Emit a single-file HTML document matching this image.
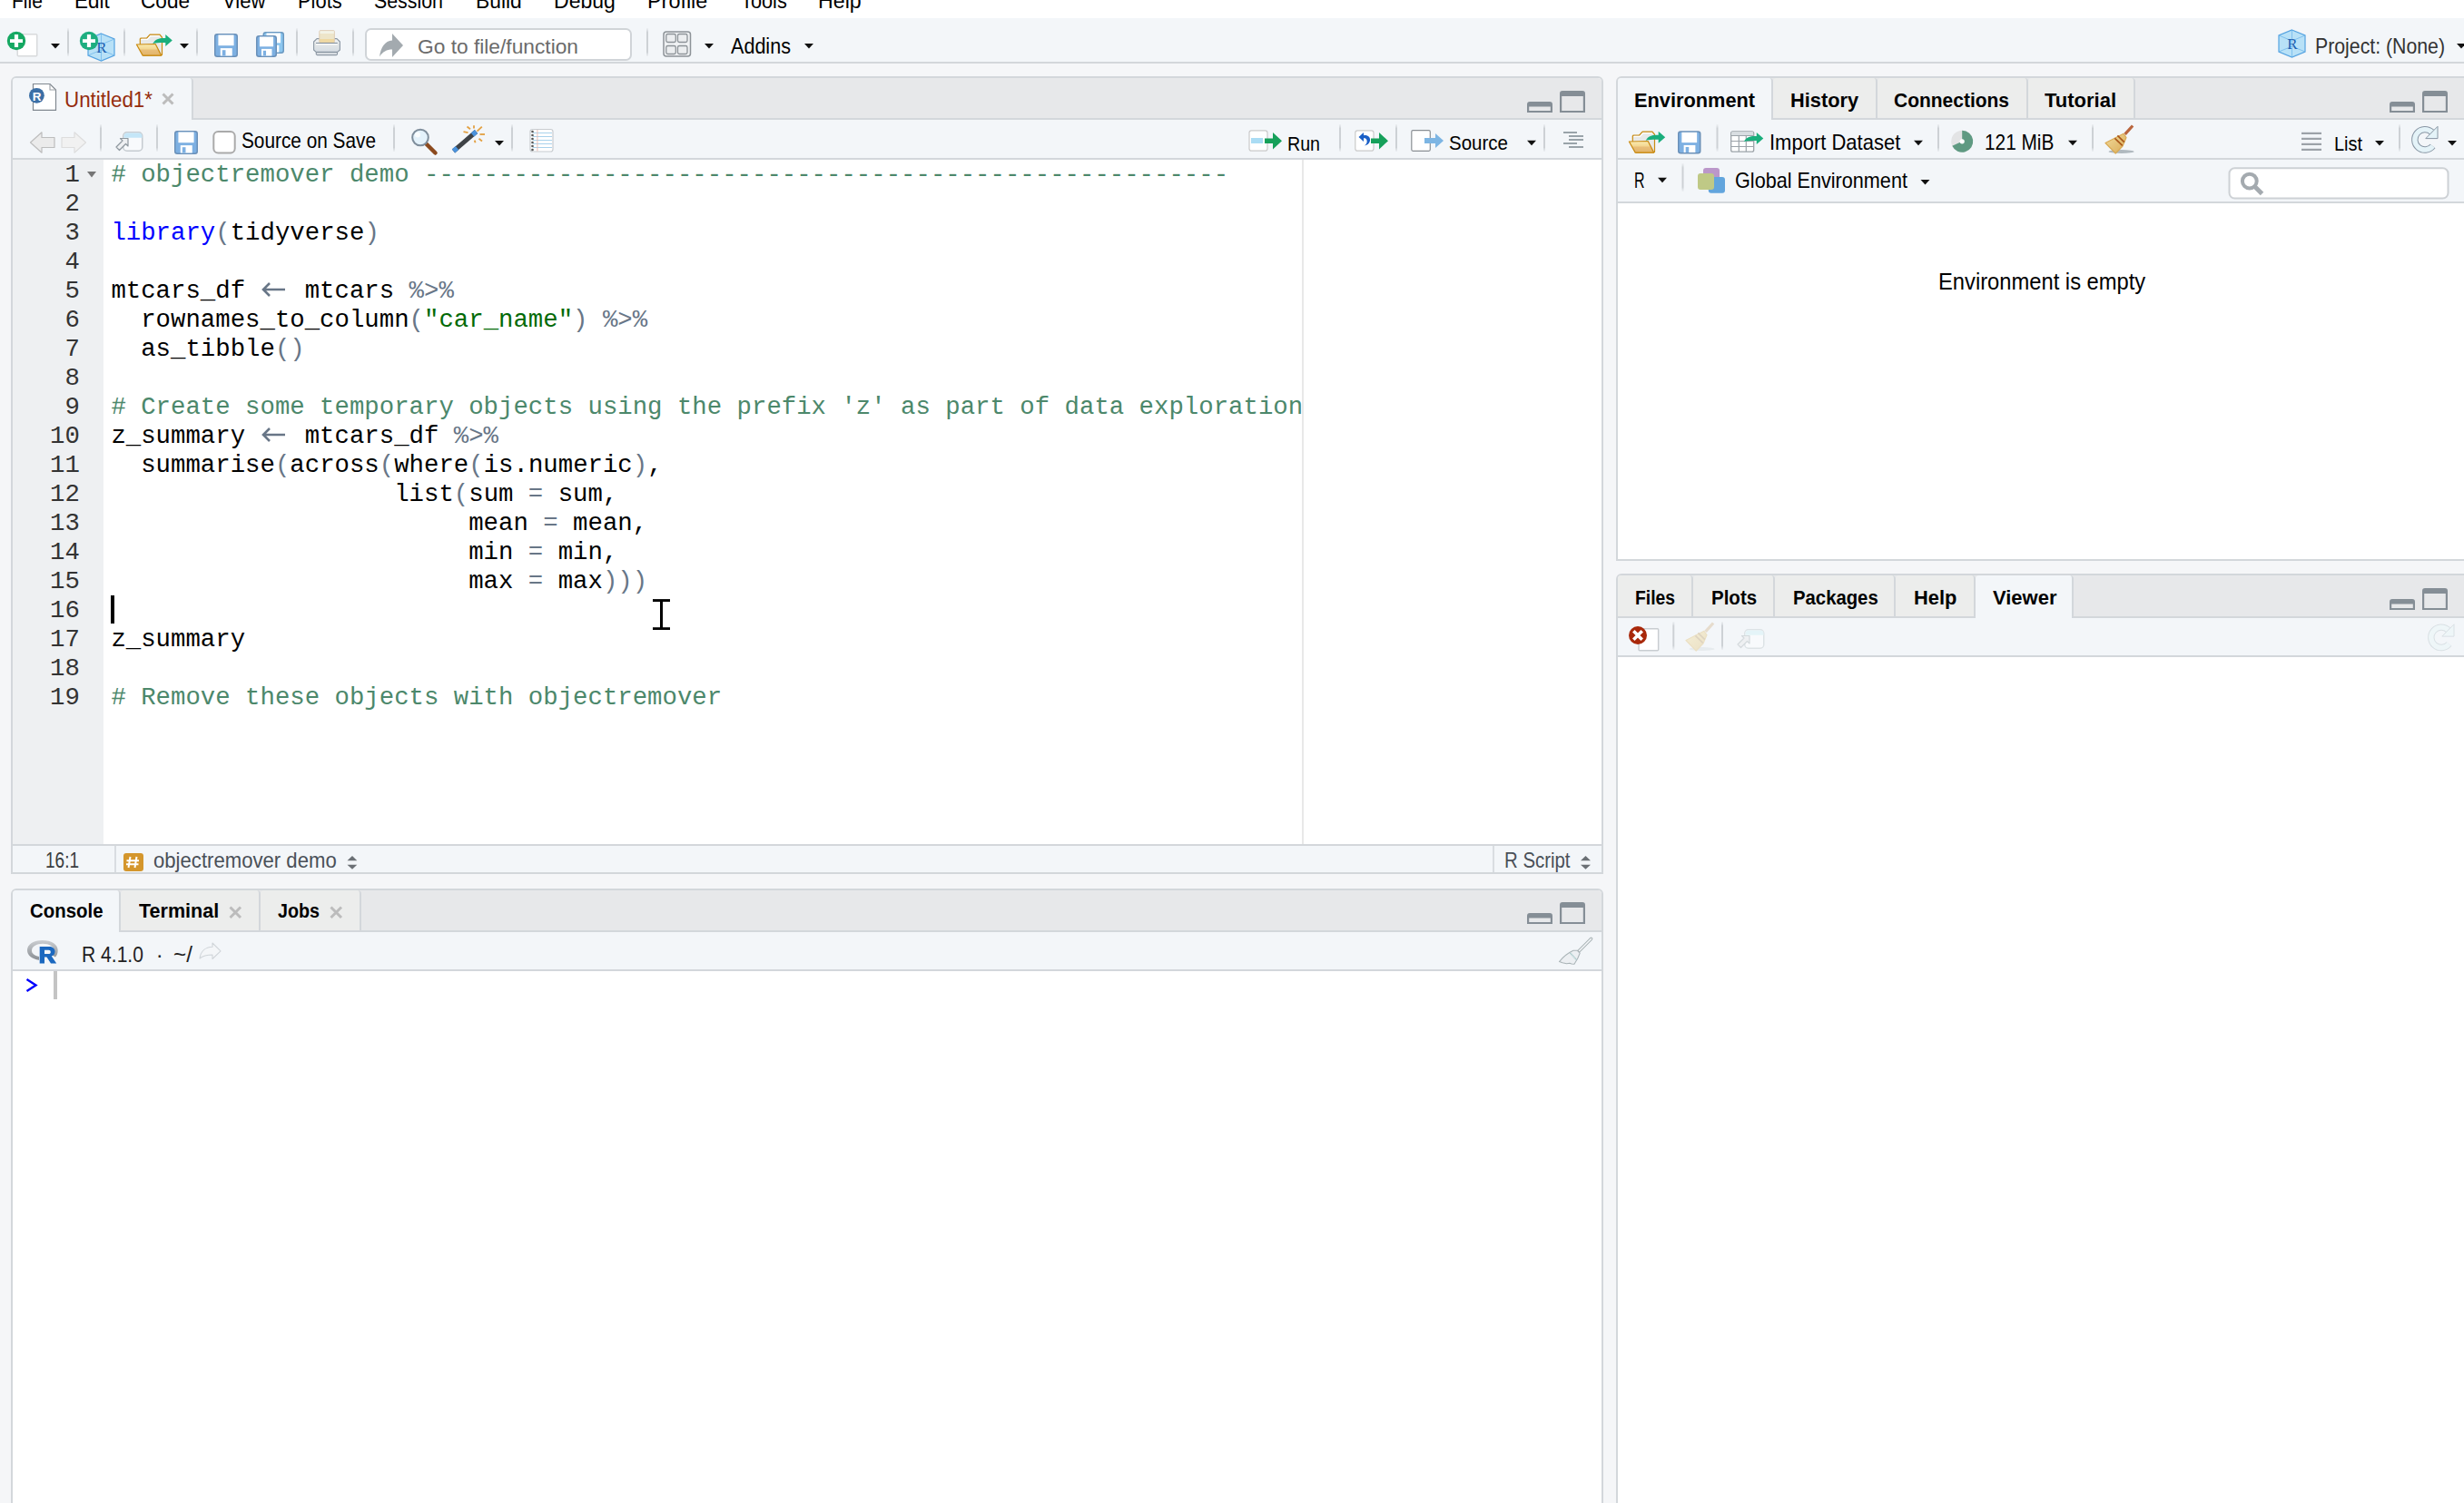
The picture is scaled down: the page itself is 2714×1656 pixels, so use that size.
<!DOCTYPE html>
<html><head><meta charset="utf-8">
<style>
html,body{margin:0;padding:0;}
body{width:2714px;height:1656px;position:relative;overflow:hidden;background:#f5f6f8;font-family:"Liberation Sans",sans-serif;color:#000;}
.a{position:absolute;box-sizing:border-box;}
svg.a{overflow:visible}
.t{position:absolute;line-height:1;white-space:pre;}
.b{font-weight:bold;}
.code{position:absolute;font-family:"Liberation Mono",monospace;font-size:27.35px;line-height:32px;white-space:pre;color:#000}
.cm{color:#4c886b}.kw{color:#0000ff}.op{color:#687687}.st{color:#036a07}
</style></head><body>
<div class="a" style="left:0;top:0;width:2714px;height:20px;background:#fff"></div>
<div class="a" style="left:0;top:20px;width:2714px;height:50px;background:#f3f6f9;border-bottom:2px solid #d3d7db"></div>
<div class="t" style="left:13.20px;top:-10.13px;font-size:23.19px;color:#000;transform:scaleX(0.9054);transform-origin:0 0">File</div>
<div class="t" style="left:82.00px;top:-10.13px;font-size:23.19px;color:#000;transform:scaleX(0.9675);transform-origin:0 0">Edit</div>
<div class="t" style="left:155.00px;top:-10.13px;font-size:23.19px;color:#000;transform:scaleX(0.9744);transform-origin:0 0">Code</div>
<div class="t" style="left:244.50px;top:-10.13px;font-size:23.19px;color:#000;transform:scaleX(0.9528);transform-origin:0 0">View</div>
<div class="t" style="left:327.70px;top:-10.13px;font-size:23.19px;color:#000;transform:scaleX(0.9439);transform-origin:0 0">Plots</div>
<div class="t" style="left:412.00px;top:-10.13px;font-size:23.19px;color:#000;transform:scaleX(0.9206);transform-origin:0 0">Session</div>
<div class="t" style="left:523.60px;top:-10.13px;font-size:23.19px;color:#000;transform:scaleX(0.9846);transform-origin:0 0">Build</div>
<div class="t" style="left:609.90px;top:-10.13px;font-size:23.19px;color:#000;transform:scaleX(0.9943);transform-origin:0 0">Debug</div>
<div class="t" style="left:713.00px;top:-10.13px;font-size:23.19px;color:#000;transform:scaleX(1.0085);transform-origin:0 0">Profile</div>
<div class="t" style="left:815.80px;top:-10.13px;font-size:23.19px;color:#000;transform:scaleX(0.9382);transform-origin:0 0">Tools</div>
<div class="t" style="left:901.00px;top:-10.13px;font-size:23.19px;color:#000;transform:scaleX(1.0010);transform-origin:0 0">Help</div>
<div class="a" style="left:12px;top:84px;width:1754px;height:879px;border:2px solid #d3d7db;border-radius:6px 6px 0 0;background:#fff;overflow:hidden"></div>
<div class="a" style="left:14px;top:86px;width:1750px;height:44px;background:#e7e8ea;border-radius:4px 4px 0 0"></div>
<div class="a" style="left:14px;top:130px;width:1750px;height:2px;background:#d3d7db"></div>
<div class="a" style="left:14px;top:86px;width:199px;height:46px;background:#f3f6f9;border-right:2px solid #d3d7db;border-radius:4px 4px 0 0"></div>
<div class="a" style="left:14px;top:132px;width:1750px;height:44px;background:#f3f6f9;border-bottom:2px solid #d3d7db"></div>
<div class="a" style="left:14px;top:176px;width:100px;height:754px;background:#eef0f2"></div>
<div class="a" style="left:1434px;top:176px;width:2px;height:755px;background:#e8e8e8"></div>
<div class="a" style="left:14px;top:930px;width:1750px;height:31px;background:#f3f6f9;border-top:2px solid #d3d7db"></div>
<div class="a" style="left:126px;top:932px;width:2px;height:29px;background:#d9dde1"></div>
<div class="a" style="left:1643.5px;top:932px;width:2px;height:29px;background:#d9dde1"></div>
<div class="a" style="left:12px;top:979px;width:1754px;height:720px;border:2px solid #d3d7db;border-radius:6px 6px 0 0;background:#fff;overflow:hidden"></div>
<div class="a" style="left:14px;top:981px;width:1750px;height:44px;background:#e7e8ea;border-radius:4px 4px 0 0"></div>
<div class="a" style="left:14px;top:1025px;width:1750px;height:2px;background:#d3d7db"></div>
<div class="a" style="left:14px;top:981px;width:119px;height:46px;background:#f3f6f9;border-right:2px solid #d3d7db;border-radius:4px 4px 0 0"></div>
<div class="a" style="left:133px;top:981px;width:154px;height:44px;background:#ecedec;border-right:2px solid #d3d7db;border-radius:4px 4px 0 0"></div>
<div class="a" style="left:287px;top:981px;width:111px;height:44px;background:#ecedec;border-right:2px solid #d3d7db;border-radius:4px 4px 0 0"></div>
<div class="a" style="left:14px;top:1027px;width:1750px;height:43px;background:#f3f6f9;border-bottom:2px solid #d3d7db"></div>
<div class="a" style="left:1780px;top:84px;width:940px;height:534px;border:2px solid #d3d7db;border-radius:6px 6px 0 0;background:#fff;overflow:hidden"></div>
<div class="a" style="left:1782px;top:86px;width:936px;height:44px;background:#e7e8ea;border-radius:4px 4px 0 0"></div>
<div class="a" style="left:1782px;top:130px;width:936px;height:2px;background:#d3d7db"></div>
<div class="a" style="left:1782px;top:86px;width:171px;height:46px;background:#f3f6f9;border-right:2px solid #d3d7db;border-radius:4px 4px 0 0"></div>
<div class="a" style="left:1953px;top:86px;width:115px;height:44px;background:#ecedec;border-right:2px solid #d3d7db;border-radius:4px 4px 0 0"></div>
<div class="a" style="left:2068px;top:86px;width:166px;height:44px;background:#ecedec;border-right:2px solid #d3d7db;border-radius:4px 4px 0 0"></div>
<div class="a" style="left:2234px;top:86px;width:118px;height:44px;background:#ecedec;border-right:2px solid #d3d7db;border-radius:4px 4px 0 0"></div>
<div class="a" style="left:1782px;top:132px;width:936px;height:44px;background:#f3f6f9;border-bottom:2px solid #d3d7db"></div>
<div class="a" style="left:1782px;top:176px;width:936px;height:48px;background:#f3f6f9;border-bottom:2px solid #d3d7db"></div>
<div class="a" style="left:1780px;top:616px;width:940px;height:2px;background:#d3d7db"></div>
<div class="a" style="left:1780px;top:632px;width:940px;height:1050px;border:2px solid #d3d7db;border-radius:6px 6px 0 0;background:#fff;overflow:hidden"></div>
<div class="a" style="left:1782px;top:634px;width:936px;height:45px;background:#e7e8ea;border-radius:4px 4px 0 0"></div>
<div class="a" style="left:1782px;top:679px;width:936px;height:2px;background:#d3d7db"></div>
<div class="a" style="left:1782px;top:634px;width:83px;height:45px;background:#ecedec;border-right:2px solid #d3d7db;border-radius:4px 4px 0 0"></div>
<div class="a" style="left:1865px;top:634px;width:90px;height:45px;background:#ecedec;border-right:2px solid #d3d7db;border-radius:4px 4px 0 0"></div>
<div class="a" style="left:1955px;top:634px;width:133px;height:45px;background:#ecedec;border-right:2px solid #d3d7db;border-radius:4px 4px 0 0"></div>
<div class="a" style="left:2088px;top:634px;width:88px;height:45px;background:#ecedec;border-right:2px solid #d3d7db;border-radius:4px 4px 0 0"></div>
<div class="a" style="left:2176px;top:634px;width:108px;height:47px;background:#f3f6f9;border-right:2px solid #d3d7db;border-radius:4px 4px 0 0"></div>
<div class="a" style="left:1782px;top:681px;width:936px;height:43px;background:#f3f6f9;border-bottom:2px solid #d3d7db"></div>
<svg style="position:absolute;left:0;top:0" width="2714" height="1656" viewBox="0 0 2714 1656"><defs><linearGradient id="sepg" x1="0" y1="0" x2="0" y2="1"><stop offset="0" stop-color="#d3d7db" stop-opacity="0.2"/><stop offset="0.15" stop-color="#cdd1d5"/><stop offset="0.85" stop-color="#cdd1d5"/><stop offset="1" stop-color="#d3d7db" stop-opacity="0.2"/></linearGradient></defs><rect x="19.25" y="37.75" width="21.5" height="24.0" rx="1" fill="#fff" stroke="#d8dadc" stroke-width="1.5"/><circle cx="18" cy="45" r="10.2" fill="#15a862"/><rect x="11" y="43.2" width="14" height="3.8" fill="#fff"/><rect x="15.9" y="38" width="4.2" height="14" fill="#fff"/><path d="M56 48H66L61.0 53.5Z" fill="#111"/><rect x="74" y="31" width="2" height="31" fill="url(#sepg)"/><polygon points="111.5,37.0 126.0,43.0 126.0,61.0 111.5,67.0 97.0,61.0 97.0,43.0" fill="#b5e0f7" stroke="#4d9fe0" stroke-width="1.2" opacity="0.95"/><path d="M111.5,37.0L111.5,67.0M97.0,43.0L111.5,49.0L126.0,43.0M97.0,61.0L111.5,55.0L126.0,61.0" stroke="#6ab4ea" stroke-width="0.9" fill="none" opacity="0.8"/><text x="112.0" y="58.0" font-family="Liberation Serif" font-size="17.0" fill="#1c5fb0" text-anchor="middle">R</text><circle cx="98" cy="45" r="10.2" fill="#1eae80"/><rect x="91" y="43.2" width="14" height="3.8" fill="#fff"/><rect x="95.9" y="38" width="4.2" height="14" fill="#fff"/><rect x="136" y="31" width="2" height="31" fill="url(#sepg)"/><defs><linearGradient id="fg150" x1="0" y1="0" x2="0" y2="1"><stop offset="0" stop-color="#fdf6d8"/><stop offset="0.12" stop-color="#f8e6a8"/><stop offset="0.45" stop-color="#f3d690"/><stop offset="0.5" stop-color="#e9bf7a"/><stop offset="1" stop-color="#e2b46a"/></linearGradient></defs><polygon points="154.3,48.7 154.3,43.0 155.2,42.0 161.7,42.0 165.1,38.1 176.0,38.1 178.5,41.2 178.5,60.2 177.5,61.1 158.0,61.1" fill="#e8e9e8" stroke="#c98a10" stroke-width="1.2" stroke-linejoin="round"/><polygon points="155.2,42.9 161.9,42.9 165.4,39.0 175.6,39.0 176.5,40.3 166.0,40.3 162.6,44.0 155.2,44.0" fill="#ffffff"/><polygon points="150.4,49.0 171.2,48.5 177.6,60.9 157.2,61.1" fill="url(#fg150)" stroke="#c98a10" stroke-width="1.2" stroke-linejoin="round"/><path d="M168.3 47.9C171.0 43.5 175.0 42.0 180.0 42.0L182.3 42.0L182.3 37.9L189.8 44.4L182.3 51.0L182.3 46.9L180.0 46.9C175.0 46.9 171.5 47.3 168.3 47.9Z" fill="#1aae7c"/><path d="M198 48H208L203.0 53.5Z" fill="#111"/><rect x="216" y="31" width="2" height="31" fill="url(#sepg)"/><rect x="236.75" y="37.75" width="24.5" height="24.5" rx="2.5" fill="#7db0e2" stroke="#6a90b8" stroke-width="1.5"/><rect x="240.42" y="38.5" width="17.16" height="11.700000000000001" fill="#fff"/><rect x="242.76" y="53.120000000000005" width="13.0" height="8.38" fill="#fff"/><rect x="244.84" y="55.2" width="3.6400000000000006" height="6.3" fill="#7db0e2"/><rect x="290.25" y="35.75" width="22.0" height="22.5" rx="2.5" fill="#8cc6ef" stroke="#6a98c0" stroke-width="1.5"/><rect x="293.495" y="36.5" width="15.510000000000002" height="10.8" fill="#fff"/><rect x="295.61" y="49.879999999999995" width="11.75" height="7.620000000000001" fill="#fff"/><rect x="297.49" y="51.8" width="3.2900000000000005" height="5.699999999999999" fill="#8cc6ef"/><rect x="282.75" y="39.75" width="21.5" height="22.5" rx="2.5" fill="#7db0e2" stroke="#6a90b8" stroke-width="1.5"/><rect x="285.91" y="40.5" width="15.180000000000001" height="10.8" fill="#fff"/><rect x="287.98" y="53.879999999999995" width="11.5" height="7.620000000000001" fill="#fff"/><rect x="289.82" y="55.8" width="3.22" height="5.699999999999999" fill="#7db0e2"/><rect x="326" y="31" width="2" height="31" fill="url(#sepg)"/><defs><linearGradient id="ppg" x1="0" y1="0" x2="0" y2="1"><stop offset="0" stop-color="#f3f3e6"/><stop offset="0.22" stop-color="#f3f3e6"/><stop offset="0.25" stop-color="#ede5c9"/><stop offset="0.7" stop-color="#ede5c9"/><stop offset="0.72" stop-color="#efd9a2"/><stop offset="1" stop-color="#efd9a2"/></linearGradient><linearGradient id="prg" x1="0" y1="0" x2="0" y2="1"><stop offset="0" stop-color="#f2f4f4"/><stop offset="0.45" stop-color="#e2e6e7"/><stop offset="1" stop-color="#d5dce3"/></linearGradient></defs><path d="M349 42.6L345.6 46V55L348.2 57.4H371.6L374.4 55V46L371 42.6Z" fill="url(#prg)" stroke="#8b97a3" stroke-width="1.1" stroke-linejoin="round"/><rect x="351.8" y="33.6" width="16.6" height="13.5" rx="1" fill="url(#ppg)" stroke="#dccbb2" stroke-width="0.9"/><rect x="348" y="47" width="23.8" height="1.1" fill="#7f8d9b"/><rect x="348" y="48.1" width="23.8" height="1.2" fill="#ffffff"/><path d="M348.3 57.6V59.8L349.3 60.6H370.6L371.5 59.8V57.6Z" fill="#e3e7eb" stroke="#8b97a3" stroke-width="1.1" stroke-linejoin="round"/><rect x="388" y="31" width="2" height="31" fill="url(#sepg)"/><rect x="403" y="32" width="292" height="34" rx="5.5" fill="#fff" stroke="#d0d4d8" stroke-width="2"/><path d="M418 62.5C419.5 52 424 45 432 44.5V37L444 50L432 63V54.5C426 54.5 421.5 57 418 62.5Z" fill="#a3aaaf"/><rect x="712" y="31" width="2" height="31" fill="url(#sepg)"/><rect x="731" y="35" width="29.5" height="27" rx="3" fill="#f0f2f4" stroke="#8d9398" stroke-width="1.5"/><rect x="733.8" y="37.5" width="10.5" height="9" rx="1.8" fill="#eceef0" stroke="#8d9398" stroke-width="1.3"/><rect x="733.8" y="50.5" width="10.5" height="9" rx="1.8" fill="#eceef0" stroke="#8d9398" stroke-width="1.3"/><rect x="746.5" y="37.5" width="10.5" height="9" rx="1.8" fill="#eceef0" stroke="#8d9398" stroke-width="1.3"/><rect x="746.5" y="50.5" width="10.5" height="9" rx="1.8" fill="#eceef0" stroke="#8d9398" stroke-width="1.3"/><path d="M776 48H786L781.0 53.5Z" fill="#111"/><path d="M886 48H896L891.0 53.5Z" fill="#111"/><polygon points="2524.5,33.0 2539.0,39.0 2539.0,57.0 2524.5,63.0 2510.0,57.0 2510.0,39.0" fill="#b5e0f7" stroke="#4d9fe0" stroke-width="1.2" opacity="0.95"/><path d="M2524.5,33.0L2524.5,63.0M2510.0,39.0L2524.5,45.0L2539.0,39.0M2510.0,57.0L2524.5,51.0L2539.0,57.0" stroke="#6ab4ea" stroke-width="0.9" fill="none" opacity="0.8"/><text x="2525.0" y="54.0" font-family="Liberation Serif" font-size="17.0" fill="#1c5fb0" text-anchor="middle">R</text><path d="M2706 48H2716L2711.0 53.5Z" fill="#111"/><path d="M36.5 92.5H55L61.5 99V121.3H36.5Z" fill="#fff" stroke="#808890" stroke-width="1.2"/><path d="M55 92.5V99H61.5" fill="none" stroke="#9aa0a6" stroke-width="1.1"/><circle cx="40.4" cy="105.3" r="8.4" fill="#3b6fa6"/><text x="40.6" y="110.5" font-family="Liberation Sans" font-weight="bold" font-size="13.5" fill="#fff" text-anchor="middle">R</text><path d="M179.5 103.5L190.5 114.5M190.5 103.5L179.5 114.5" stroke="#bcbcbc" stroke-width="3"/><path d="M33.5 157L46 145.8V151.5H60V162.5H46V168.2Z" fill="#ebebeb" stroke="#bdbdbd" stroke-width="1.2" stroke-linejoin="round"/><path d="M94.5 157L82 145.8V151.5H68V162.5H82V168.2Z" fill="#f1f1f1" stroke="#dddddd" stroke-width="1.2" stroke-linejoin="round"/><rect x="110" y="137" width="2" height="30" fill="url(#sepg)"/><rect x="135.75" y="145.75" width="21" height="20.5" rx="4" fill="#f8fafc" stroke="#c5cbd0" stroke-width="1.5"/><path d="M136.5 150a3.5 3.5 0 0 1 3.5-3.5h13a3.5 3.5 0 0 1 3.5 3.5v1.8h-20z" fill="#c4e6f8"/><path d="M128 162L135 155L132.5 152.5H141V161L138.5 158.5L131.5 165.5Z" fill="#eef0f2" stroke="#8e979e" stroke-width="1.2" stroke-linejoin="round"/><rect x="172" y="137" width="2" height="30" fill="url(#sepg)"/><rect x="192.75" y="144.75" width="24.5" height="24.5" rx="2.5" fill="#7db0e2" stroke="#6a90b8" stroke-width="1.5"/><rect x="196.42" y="145.5" width="17.16" height="11.700000000000001" fill="#fff"/><rect x="198.76" y="160.12" width="13.0" height="8.38" fill="#fff"/><rect x="200.84" y="162.2" width="3.6400000000000006" height="6.3" fill="#7db0e2"/><rect x="235.3" y="145" width="23.4" height="23.6" rx="5" fill="#fff" stroke="#aaaaaa" stroke-width="2"/><rect x="433" y="137" width="2" height="30" fill="url(#sepg)"/><path d="M469 158L479.5 168.5" stroke="#8c4a1e" stroke-width="4.5" stroke-linecap="round"/><circle cx="463" cy="151.5" r="8.8" fill="#e4f2fb" stroke="#7f8e9c" stroke-width="2"/><circle cx="460" cy="148.5" r="3" fill="#fff" opacity="0.8"/><path d="M499.5 166.5L524.5 145" stroke="#3e4246" stroke-width="5"/><path d="M499.5 166.5L503.5 163M520.5 148.5L524.5 145" stroke="#4a92dc" stroke-width="5.2"/><path d="M514.5 139.5L518 142.3" stroke="#e3a040" stroke-width="1.8"/><path d="M522 138.3L522 141.5" stroke="#e3a040" stroke-width="1.8"/><path d="M525.5 144.6L530.8 139.6" stroke="#e3a040" stroke-width="1.8"/><path d="M510.5 145.2L515.5 146.1" stroke="#e3a040" stroke-width="1.8"/><path d="M528.5 148L534 148" stroke="#e3a040" stroke-width="1.8"/><path d="M527.5 152.8L531 155.5" stroke="#e3a040" stroke-width="1.8"/><path d="M522.7 154.6L523.6 157.2" stroke="#e3a040" stroke-width="1.8"/><path d="M545 155H555L550.0 160.5Z" fill="#111"/><rect x="563" y="137" width="2" height="30" fill="url(#sepg)"/><rect x="584" y="142.5" width="25" height="24.5" rx="2.5" fill="#fff" stroke="#c8ccd0" stroke-width="1.2"/><rect x="587" y="146" width="21" height="1" fill="#a9d2ec"/><rect x="587" y="150" width="21" height="1" fill="#a9d2ec"/><rect x="587" y="154" width="21" height="1" fill="#a9d2ec"/><rect x="587" y="158" width="21" height="1" fill="#a9d2ec"/><rect x="587" y="162" width="21" height="1" fill="#a9d2ec"/><rect x="591.5" y="143" width="0.9" height="23.5" fill="#e8b8b0"/><circle cx="586.5" cy="145" r="1.3" fill="#555"/><circle cx="586.5" cy="149" r="1.3" fill="#555"/><circle cx="586.5" cy="153" r="1.3" fill="#555"/><circle cx="586.5" cy="157" r="1.3" fill="#555"/><circle cx="586.5" cy="161" r="1.3" fill="#555"/><circle cx="586.5" cy="165" r="1.3" fill="#555"/><rect x="1376" y="143.8" width="20" height="22.4" rx="2.5" fill="#fff" stroke="#cacaca" stroke-width="1.2"/><rect x="1378" y="152" width="13" height="6" fill="#aadcf4"/><path d="M1393 152.5H1402V146L1412 155.2L1402 164.5V158H1393Z" fill="#16a05a"/><rect x="1475" y="137" width="2" height="30" fill="url(#sepg)"/><rect x="1492.8" y="143.8" width="20.2" height="22.4" rx="2.5" fill="#fff" stroke="#cacaca" stroke-width="1.2"/><path d="M1496.5 151L1502 146V149C1507 148.5 1509.5 151 1509 155C1508.5 158 1506 160 1503 160.5C1505.5 158.5 1506 156.5 1505.5 154.5C1505 152.5 1503.5 152 1502 152.2V156Z" fill="#1a5fc6"/><path d="M1510 152.5H1519V146L1529 155.2L1519 164.5V158H1510Z" fill="#16a05a"/><rect x="1537" y="137" width="2" height="30" fill="url(#sepg)"/><rect x="1554.8" y="143.7" width="20.5" height="22.6" rx="1.5" fill="#fff" stroke="#8a8f94" stroke-width="1.2"/><path d="M1569 152H1581V147L1590 155L1581 163V158H1569Z" fill="#7db5e3"/><path d="M1682 154.7H1692L1687.0 160.2Z" fill="#111"/><rect x="1700" y="137" width="2" height="30" fill="url(#sepg)"/><rect x="1722" y="145" width="15" height="2" fill="#99a3a9"/><rect x="1728" y="149" width="16" height="2" fill="#99a3a9"/><rect x="1728" y="153" width="16" height="2" fill="#99a3a9"/><rect x="1722" y="157" width="15" height="2" fill="#99a3a9"/><rect x="1728" y="161" width="16" height="2" fill="#99a3a9"/><path d="M1682 124V115a3 3 0 0 1 3-3h22a3 3 0 0 1 3 3v9z M1684.2 122h23.6v-4.4H1684.2z" fill="#858e96" fill-rule="evenodd"/><path d="M1718 124V103a3 3 0 0 1 3-3h22a3 3 0 0 1 3 3v21z M1720.2 122h23.6V106H1720.2z" fill="#858e96" fill-rule="evenodd"/><rect x="136" y="940" width="22" height="20" rx="3" fill="#d4962c"/><path d="M143.5 944L141.5 956M150.5 944L148.5 956M139.5 948.3H153M139 952.3H152.5" stroke="#fff" stroke-width="2"/><path d="M382.5 948.2L388 943L393.3 948.2Z M382.5 952.7L388 957.8L393.3 952.7Z" fill="#6b7075"/><path d="M1741 948.2L1746.5 943L1752 948.2Z M1741 952.7L1746.5 957.8L1752 952.7Z" fill="#6b7075"/><path d="M1682 1018V1009a3 3 0 0 1 3-3h22a3 3 0 0 1 3 3v9z M1684.2 1016h23.6v-4.4H1684.2z" fill="#858e96" fill-rule="evenodd"/><path d="M1718 1018V997a3 3 0 0 1 3-3h22a3 3 0 0 1 3 3v21z M1720.2 1016h23.6V1000H1720.2z" fill="#858e96" fill-rule="evenodd"/><path d="M253.5 999.5L265 1011M265 999.5L253.5 1011" stroke="#bcbcbc" stroke-width="3"/><path d="M364.5 999.5L376 1011M376 999.5L364.5 1011" stroke="#bcbcbc" stroke-width="3"/><defs><linearGradient id="rlg" x1="0" y1="0" x2="0" y2="1"><stop offset="0" stop-color="#cbced1"/><stop offset="1" stop-color="#8a8f94"/></linearGradient></defs><path d="M46.8 1036C37 1036 30 1040.5 30 1047C30 1052.5 35 1056.5 43 1057.8V1054C38 1053 35 1050.5 35 1047.5C35 1043 40 1039.8 47 1039.8C54.5 1039.8 59.5 1043 59.5 1047.5C59.5 1049.3 58.5 1051 57 1052.2L61 1054.5C62.8 1052.5 63.7 1050 63.7 1047C63.7 1040.5 56.5 1036 46.8 1036Z" fill="url(#rlg)"/><path d="M43.7 1043H54.5C58.5 1043 60.5 1045.5 60.5 1048.5C60.5 1051 59 1052.8 56.8 1053.5L62.2 1061.6H56L51.5 1054.5H49V1061.6H43.7Z M49 1046.8V1051H53.5C55 1051 55.8 1050.2 55.8 1048.9C55.8 1047.6 55 1046.8 53.5 1046.8Z" fill="#1b68bf" fill-rule="evenodd"/><path d="M220 1056C221 1048.5 226 1043.5 234 1043.3V1039L243 1047.8L234 1056.5V1052C228 1052 223.5 1053 220 1056Z" fill="#f4f6f8" stroke="#d0d5d9" stroke-width="1.1" stroke-linejoin="round"/><path d="M1752.5 1034.5L1739.5 1047.5" stroke="#a9b3b6" stroke-width="3.6" stroke-linecap="round"/><path d="M1752.5 1034.5L1739.5 1047.5" stroke="#f4f6f8" stroke-width="1.6" stroke-linecap="round"/><path d="M1737.5 1047.3L1740.2 1050.2C1739 1054 1737 1058 1734 1062.3L1731 1062L1729 1061.3L1725.5 1061.8L1721 1060.8L1717.5 1059.6C1722 1054 1727 1050 1733 1047.3Z" fill="#eceff2" stroke="#a9b3b6" stroke-width="1.1" stroke-linejoin="round"/><path d="M1729.5 1050L1736.5 1057.5" stroke="#9ec4c4" stroke-width="1.6" stroke-dasharray="1 0.6"/><path d="M29.5 1079L39.5 1085.5L29.5 1092" stroke="#0000ff" stroke-width="2.4" fill="none"/><path d="M2632 124V115a3 3 0 0 1 3-3h22a3 3 0 0 1 3 3v9z M2634.2 122h23.6v-4.4H2634.2z" fill="#858e96" fill-rule="evenodd"/><path d="M2668 124V103a3 3 0 0 1 3-3h22a3 3 0 0 1 3 3v21z M2670.2 122h23.6V106H2670.2z" fill="#858e96" fill-rule="evenodd"/><defs><linearGradient id="fg1794" x1="0" y1="0" x2="0" y2="1"><stop offset="0" stop-color="#fdf6d8"/><stop offset="0.12" stop-color="#f8e6a8"/><stop offset="0.45" stop-color="#f3d690"/><stop offset="0.5" stop-color="#e9bf7a"/><stop offset="1" stop-color="#e2b46a"/></linearGradient></defs><polygon points="1798.3,155.7 1798.3,150.0 1799.2,149.0 1805.7,149.0 1809.1,145.1 1820.0,145.1 1822.5,148.2 1822.5,167.2 1821.5,168.1 1802.0,168.1" fill="#e8e9e8" stroke="#c98a10" stroke-width="1.2" stroke-linejoin="round"/><polygon points="1799.2,149.9 1805.9,149.9 1809.4,146.0 1819.6,146.0 1820.5,147.3 1810.0,147.3 1806.6,151.0 1799.2,151.0" fill="#ffffff"/><polygon points="1794.4,156.0 1815.2,155.5 1821.6,167.9 1801.2,168.1" fill="url(#fg1794)" stroke="#c98a10" stroke-width="1.2" stroke-linejoin="round"/><path d="M1812.7 154.7C1815.4 150.3 1819.4 148.8 1824.4 148.8L1826.7 148.8L1826.7 144.7L1834.2 151.2L1826.7 157.8L1826.7 153.7L1824.4 153.7C1819.4 153.7 1815.9 154.1 1812.7 154.7Z" fill="#1aae7c"/><rect x="1848.75" y="145.05" width="24.0" height="23.69999999999999" rx="2.5" fill="#7db0e2" stroke="#6a90b8" stroke-width="1.5"/><rect x="1852.335" y="145.8" width="16.830000000000002" height="11.339999999999995" fill="#fff"/><rect x="1854.63" y="159.924" width="12.75" height="8.075999999999995" fill="#fff"/><rect x="1856.67" y="161.94" width="3.5700000000000003" height="6.059999999999996" fill="#7db0e2"/><rect x="1890.5" y="137" width="2" height="30" fill="url(#sepg)"/><rect x="1906.7" y="144.8" width="25" height="22.4" rx="2" fill="#fff" stroke="#9ca3a9" stroke-width="1.3"/><rect x="1907.3" y="145.4" width="23.8" height="4" fill="#d9dee2"/><path d="M1915.3 149.5V167M1923.3 149.5V167M1907 149.5H1931.5M1907 155.5H1931.5M1907 161.5H1931.5" stroke="#9ca3a9" stroke-width="1.2"/><path d="M1920.8 155.9C1923.5 151.5 1927.5 150.0 1932.5 150.0L1934.8 150.0L1934.8 145.9L1942.3 152.4L1934.8 159.0L1934.8 154.9L1932.5 154.9C1927.5 154.9 1924.0 155.3 1920.8 155.9Z" fill="#1aae7c"/><path d="M2108 154.8H2118L2113.0 160.3Z" fill="#111"/><rect x="2134" y="137" width="2" height="30" fill="url(#sepg)"/><circle cx="2161.2" cy="155.8" r="12" fill="#e3e4e5"/><path d="M2161.2 155.8V143.8A12 12 0 1 1 2150.3 160.8Z" fill="#5f9a82"/><circle cx="2161.2" cy="155.8" r="2.6" fill="#fff"/><path d="M2278 154.8H2288L2283.0 160.3Z" fill="#111"/><rect x="2304" y="137" width="2" height="30" fill="url(#sepg)"/><defs><linearGradient id="bg2319138" x1="0" y1="0" x2="1" y2="1"><stop offset="0" stop-color="#f2dc9e"/><stop offset="1" stop-color="#d9aa55"/></linearGradient></defs><ellipse cx="2336.6" cy="167.0" rx="14" ry="1.9" fill="#9aa4ab" opacity="0.75"/><path d="M2349.1 138.5L2340.6 147.8" stroke="#b9653d" stroke-width="3.2"/><polygon points="2339.0,147.3 2342.0,151.5 2338.0,161.0 2330.2,169.0 2319.0,157.5" fill="url(#bg2319138)" stroke="#d9aa55" stroke-width="1.2" stroke-linejoin="round"/><path d="M2332.4 149.4L2339.8 156.6M2329.4 152.4L2337.7 160.3" stroke="#a8561a" stroke-width="1.6"/><rect x="2535" y="145.8" width="22" height="2.2" fill="#9ca2a8"/><rect x="2535" y="151.8" width="22" height="2.2" fill="#9ca2a8"/><rect x="2535" y="157.8" width="22" height="2.2" fill="#9ca2a8"/><rect x="2535" y="163.8" width="22" height="2.2" fill="#9ca2a8"/><path d="M2616 154.9H2626L2621.0 160.4Z" fill="#111"/><rect x="2642" y="137" width="2" height="30" fill="url(#sepg)"/><path d="M2679.6 161.0A11.2 11.2 0 1 1 2678.5 145.5" fill="none" stroke="#8896a4" stroke-width="7.4"/><path d="M2679.6 161.0A11.2 11.2 0 1 1 2678.5 145.5" fill="none" stroke="#e4f3f8" stroke-width="5.4"/><polygon points="2685,139.3 2685,152.60000000000002 2671.8,152.60000000000002" fill="#e4f3f8" stroke="#8896a4" stroke-width="1"/><path d="M2696 155H2706L2701.0 160.5Z" fill="#111"/><path d="M1826 195.8H1836L1831.0 201.3Z" fill="#111"/><rect x="1852.5" y="180" width="2" height="31" fill="url(#sepg)"/><rect x="1876" y="185" width="18" height="18" rx="3" fill="#bb97ca"/><rect x="1881.8" y="195" width="18.2" height="17.8" rx="3" fill="#62a5dd"/><rect x="1870" y="190.9" width="18" height="18" rx="3" fill="#bfc986"/><path d="M2115.5 198H2125.5L2120.5 203.5Z" fill="#111"/><rect x="2455.5" y="185.3" width="241" height="33.3" rx="6" fill="#fff" stroke="#cdd1d5" stroke-width="2"/><circle cx="2477.8" cy="199.6" r="7.9" fill="none" stroke="#a4aaaf" stroke-width="4"/><path d="M2483.5 205.5L2491.5 213.5" stroke="#a4aaaf" stroke-width="5"/><path d="M2632 672V663a3 3 0 0 1 3-3h22a3 3 0 0 1 3 3v9z M2634.2 670h23.6v-4.4H2634.2z" fill="#858e96" fill-rule="evenodd"/><path d="M2668 672V651a3 3 0 0 1 3-3h22a3 3 0 0 1 3 3v21z M2670.2 670h23.6V654H2670.2z" fill="#858e96" fill-rule="evenodd"/><rect x="1805.05" y="692.75" width="21.600000000000136" height="24.100000000000023" rx="1" fill="#fff" stroke="#c9cdd1" stroke-width="1.5"/><circle cx="1804" cy="700" r="10" fill="#a9290b"/><path d="M1799.3 695.3L1808.7 704.7M1808.7 695.3L1799.3 704.7" stroke="#fff" stroke-width="3.6"/><rect x="1842.3" y="685" width="2" height="31" fill="url(#sepg)"/><defs><linearGradient id="bg1857686" x1="0" y1="0" x2="1" y2="1"><stop offset="0" stop-color="#f4eed6"/><stop offset="1" stop-color="#ebe0c4"/></linearGradient></defs><ellipse cx="1874.6" cy="715.0" rx="14" ry="1.9" fill="#e2e7ea" opacity="0.75"/><path d="M1887.1 686.5L1878.6 695.8" stroke="#e6dccd" stroke-width="3.2"/><polygon points="1877.0,695.3 1880.0,699.5 1876.0,709.0 1868.2,717.0 1857.0,705.5" fill="url(#bg1857686)" stroke="#ebe0c4" stroke-width="1.2" stroke-linejoin="round"/><path d="M1870.4 697.4L1877.8 704.6M1867.4 700.4L1875.7 708.3" stroke="#ddd3c0" stroke-width="1.6"/><rect x="1896" y="685" width="2" height="31" fill="url(#sepg)"/><rect x="1921.75" y="693.75" width="21" height="20.5" rx="4" fill="#f8fafc" stroke="#dde3e6" stroke-width="1.5"/><path d="M1922.5 698a3.5 3.5 0 0 1 3.5-3.5h13a3.5 3.5 0 0 1 3.5 3.5v1.8h-20z" fill="#e4f4f8"/><path d="M1914 710L1921 703L1918.5 700.5H1927V709L1924.5 706.5L1917.5 713.5Z" fill="#eef0f2" stroke="#d4dadd" stroke-width="1.2" stroke-linejoin="round"/><path d="M2697.6 709.5A11.2 11.2 0 1 1 2696.5 694.0" fill="none" stroke="#d9e0e4" stroke-width="7.4"/><path d="M2697.6 709.5A11.2 11.2 0 1 1 2696.5 694.0" fill="none" stroke="#eef6f8" stroke-width="5.4"/><polygon points="2703,687.8 2703,701.0999999999999 2689.8,701.0999999999999" fill="#eef6f8" stroke="#d9e0e4" stroke-width="1"/><rect x="719" y="660.1" width="19" height="2.9" fill="#000"/><rect x="719" y="691.2" width="19" height="2.8" fill="#000"/><rect x="727" y="662" width="3" height="30" fill="#000"/></svg>
<div class="t" style="left:460.00px;top:40.70px;font-size:22.32px;color:#6b6b6b;transform:scaleX(1.0193);transform-origin:0 0">Go to file/function</div>
<div class="t" style="left:805.00px;top:38.75px;font-size:23.91px;color:#000;transform:scaleX(0.9020);transform-origin:0 0">Addins</div>
<div class="t" style="left:2550.00px;top:40.27px;font-size:23.19px;color:#333;transform:scaleX(0.9170);transform-origin:0 0">Project: (None)</div>
<div class="t" style="left:71.00px;top:98.05px;font-size:23.91px;color:#952c0d;transform:scaleX(0.9357);transform-origin:0 0">Untitled1*</div>
<div class="t" style="left:266.00px;top:144.37px;font-size:23.19px;color:#000;transform:scaleX(0.8970);transform-origin:0 0">Source on Save</div>
<div class="t" style="left:1418.00px;top:147.66px;font-size:22.61px;color:#000;transform:scaleX(0.8677);transform-origin:0 0">Run</div>
<div class="t" style="left:1596.00px;top:147.36px;font-size:22.61px;color:#000;transform:scaleX(0.9069);transform-origin:0 0">Source</div>
<div class="t b" style="left:1800.00px;top:99.86px;font-size:22.61px;color:#000;transform:scaleX(0.9628);transform-origin:0 0">Environment</div>
<div class="t b" style="left:1972.00px;top:99.86px;font-size:22.61px;color:#000;transform:scaleX(0.9629);transform-origin:0 0">History</div>
<div class="t b" style="left:2086.00px;top:99.86px;font-size:22.61px;color:#000;transform:scaleX(0.9277);transform-origin:0 0">Connections</div>
<div class="t b" style="left:2252.00px;top:99.86px;font-size:22.61px;color:#000;transform:scaleX(0.9733);transform-origin:0 0">Tutorial</div>
<div class="t" style="left:1948.70px;top:145.57px;font-size:23.19px;color:#000;transform:scaleX(0.9486);transform-origin:0 0">Import Dataset</div>
<div class="t" style="left:2185.60px;top:145.57px;font-size:23.19px;color:#000;transform:scaleX(0.8978);transform-origin:0 0">121 MiB</div>
<div class="t" style="left:2571.00px;top:147.66px;font-size:22.61px;color:#000;transform:scaleX(0.8818);transform-origin:0 0">List</div>
<div class="t" style="left:1800.00px;top:188.37px;font-size:23.19px;color:#000;transform:scaleX(0.6888);transform-origin:0 0">R</div>
<div class="t" style="left:1911.00px;top:188.37px;font-size:23.19px;color:#000;transform:scaleX(0.9327);transform-origin:0 0">Global Environment</div>
<div class="t" style="left:2134.70px;top:298.39px;font-size:24.93px;color:#000;transform:scaleX(0.9525);transform-origin:0 0">Environment is empty</div>
<div class="t b" style="left:1801.00px;top:647.86px;font-size:22.61px;color:#000;transform:scaleX(0.8536);transform-origin:0 0">Files</div>
<div class="t b" style="left:1884.70px;top:647.86px;font-size:22.61px;color:#000;transform:scaleX(0.9063);transform-origin:0 0">Plots</div>
<div class="t b" style="left:1974.80px;top:647.86px;font-size:22.61px;color:#000;transform:scaleX(0.8980);transform-origin:0 0">Packages</div>
<div class="t b" style="left:2107.70px;top:647.86px;font-size:22.61px;color:#000;transform:scaleX(0.9663);transform-origin:0 0">Help</div>
<div class="t b" style="left:2194.60px;top:647.86px;font-size:22.61px;color:#000;transform:scaleX(0.9716);transform-origin:0 0">Viewer</div>
<div class="t b" style="left:32.50px;top:993.16px;font-size:22.61px;color:#000;transform:scaleX(0.9026);transform-origin:0 0">Console</div>
<div class="t b" style="left:152.50px;top:993.16px;font-size:22.61px;color:#000;transform:scaleX(0.9527);transform-origin:0 0">Terminal</div>
<div class="t b" style="left:305.90px;top:993.16px;font-size:22.61px;color:#000;transform:scaleX(0.8732);transform-origin:0 0">Jobs</div>
<div class="t" style="left:50.00px;top:936.72px;font-size:23.48px;color:#3a3d40;transform:scaleX(0.8102);transform-origin:0 0">16:1</div>
<div class="t" style="left:168.90px;top:937.17px;font-size:23.19px;color:#4a5058;transform:scaleX(0.9543);transform-origin:0 0">objectremover demo</div>
<div class="t" style="left:1656.50px;top:937.17px;font-size:23.19px;color:#4a5058;transform:scaleX(0.8795);transform-origin:0 0">R Script</div>
<div class="t" style="left:89.50px;top:1039.94px;font-size:24.64px;color:#222;transform:scaleX(0.8558);transform-origin:0 0">R 4.1.0</div>
<div class="t" style="left:171.70px;top:1039.68px;font-size:24.00px;color:#222;transform:scaleX(1.0000);transform-origin:0 0">·</div>
<div class="t" style="left:190.80px;top:1039.94px;font-size:24.64px;color:#222;transform:scaleX(0.9854);transform-origin:0 0">~/</div>
<div class="code" style="left:71.39px;top:177.20px;color:#333">1</div>
<div class="code" style="left:122.4px;top:177.20px;"><span class="cm"># objectremover demo ------------------------------------------------------</span></div>
<div class="code" style="left:71.39px;top:209.20px;color:#333">2</div>
<div class="code" style="left:71.39px;top:241.20px;color:#333">3</div>
<div class="code" style="left:122.4px;top:241.20px;"><span class="kw">library</span><span class="op">(</span>tidyverse<span class="op">)</span></div>
<div class="code" style="left:71.39px;top:273.20px;color:#333">4</div>
<div class="code" style="left:71.39px;top:305.20px;color:#333">5</div>
<div class="code" style="left:122.4px;top:305.20px;">mtcars_df <svg width="32.82" height="20" viewBox="0 0 32.8 20" style="vertical-align:-1px"><path d="M4 10H28M11 3L4 10L11 17" stroke="#687687" stroke-width="2.6" fill="none"/></svg> mtcars <span class="op">%&gt;%</span></div>
<div class="code" style="left:71.39px;top:337.20px;color:#333">6</div>
<div class="code" style="left:122.4px;top:337.20px;">  rownames_to_column<span class="op">(</span><span class="st">"car_name"</span><span class="op">)</span> <span class="op">%&gt;%</span></div>
<div class="code" style="left:71.39px;top:369.20px;color:#333">7</div>
<div class="code" style="left:122.4px;top:369.20px;">  as_tibble<span class="op">()</span></div>
<div class="code" style="left:71.39px;top:401.20px;color:#333">8</div>
<div class="code" style="left:71.39px;top:433.20px;color:#333">9</div>
<div class="code" style="left:122.4px;top:433.20px;"><span class="cm"># Create some temporary objects using the prefix 'z' as part of data exploration</span></div>
<div class="code" style="left:54.98px;top:465.20px;color:#333">10</div>
<div class="code" style="left:122.4px;top:465.20px;">z_summary <svg width="32.82" height="20" viewBox="0 0 32.8 20" style="vertical-align:-1px"><path d="M4 10H28M11 3L4 10L11 17" stroke="#687687" stroke-width="2.6" fill="none"/></svg> mtcars_df <span class="op">%&gt;%</span></div>
<div class="code" style="left:54.98px;top:497.20px;color:#333">11</div>
<div class="code" style="left:122.4px;top:497.20px;">  summarise<span class="op">(</span>across<span class="op">(</span>where<span class="op">(</span>is.numeric<span class="op">)</span>,</div>
<div class="code" style="left:54.98px;top:529.20px;color:#333">12</div>
<div class="code" style="left:122.4px;top:529.20px;">                   list<span class="op">(</span>sum <span class="op">=</span> sum,</div>
<div class="code" style="left:54.98px;top:561.20px;color:#333">13</div>
<div class="code" style="left:122.4px;top:561.20px;">                        mean <span class="op">=</span> mean,</div>
<div class="code" style="left:54.98px;top:593.20px;color:#333">14</div>
<div class="code" style="left:122.4px;top:593.20px;">                        min <span class="op">=</span> min,</div>
<div class="code" style="left:54.98px;top:625.20px;color:#333">15</div>
<div class="code" style="left:122.4px;top:625.20px;">                        max <span class="op">=</span> max<span class="op">)))</span></div>
<div class="code" style="left:54.98px;top:657.20px;color:#333">16</div>
<div class="code" style="left:54.98px;top:689.20px;color:#333">17</div>
<div class="code" style="left:122.4px;top:689.20px;">z_summary</div>
<div class="code" style="left:54.98px;top:721.20px;color:#333">18</div>
<div class="code" style="left:54.98px;top:753.20px;color:#333">19</div>
<div class="code" style="left:122.4px;top:753.20px;"><span class="cm"># Remove these objects with objectremover</span></div>
<svg class="a" style="left:96px;top:188.5px;" width="10" height="6.5" viewBox="0 0 10 6.5"><path d="M0 0H10L5 6.5Z" fill="#767676"/></svg>
<div class="a" style="left:122px;top:656px;width:4px;height:31px;background:#000"></div>
<div class="a" style="left:59px;top:1070px;width:4px;height:31px;background:#c4c4c4"></div>
</body></html>
